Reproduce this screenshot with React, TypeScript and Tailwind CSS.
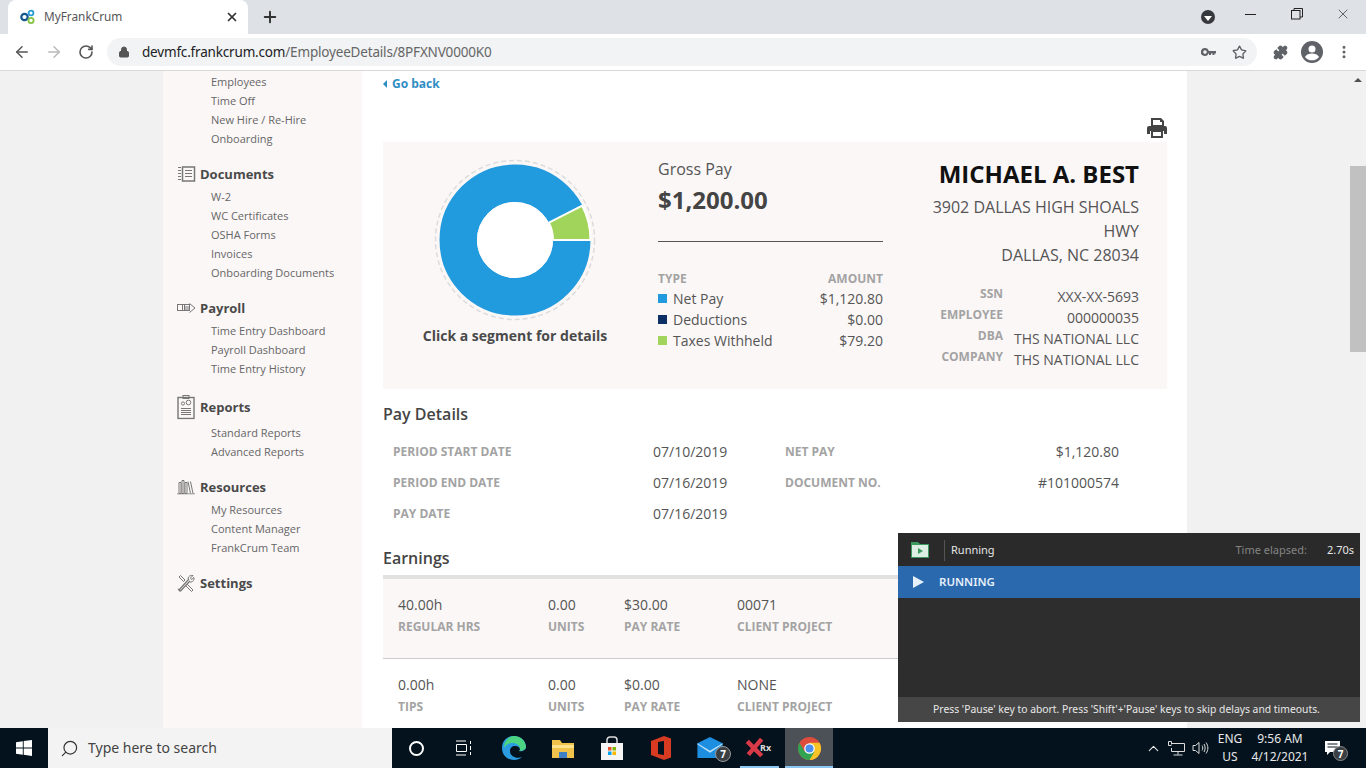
import { ArrowLeft, ArrowRight, ChevronUp, EllipsisVertical, Lock, Plus, Puzzle, RotateCw, Search, Star, X } from "lucide-react";
import type { ReactNode } from "react";

const sans = "font-['Open_Sans',sans-serif]";

function NavGroup({ icon, title, items, className }: { icon?: ReactNode; title?: string; items?: string[]; className: string }) {
  return (
    <div className={className}>
      {title && (
        <div className="relative flex h-5 items-center pl-[37px] text-[13px] font-bold leading-5 text-[#4a4a4a]">
          <span className="absolute left-[14px] top-1/2 -translate-y-1/2">{icon}</span>
          {title}
        </div>
      )}
      {items && (
        <ul className={title ? "pl-[48px] pt-[3px]" : "pl-[48px]"}>
          {items.map((item) => (
            <li key={item} className="h-[19px] text-[11px] leading-[19px] text-[#666]">
              {item}
            </li>
          ))}
        </ul>
      )}
    </div>
  );
}

const lineIcon = { fill: "none", stroke: "#777", strokeWidth: 1 };

function DocumentsIcon() {
  return (
    <svg width="19" height="17" viewBox="0 0 19 17" {...lineIcon} className="block">
      <rect x="5.5" y="1.5" width="12" height="14" strokeWidth="1.5" />
      <path d="M8 5h7M8 8h7M8 11h7M1 2h3M1 5h3M1 8h3M1 11h3M1 14h3" />
    </svg>
  );
}

function PayrollIcon() {
  return (
    <svg width="19" height="12" viewBox="0 0 19 12" {...lineIcon} className="block">
      <rect x="0.5" y="2.5" width="7" height="6" />
      <rect x="5.5" y="2.5" width="7" height="6" />
      <path d="M12.5 1.5 18 6l-5.500 4.500M8 5h4M8 7h4" />
    </svg>
  );
}

function ReportsIcon() {
  return (
    <svg width="19" height="25" viewBox="0 0 19 25" {...lineIcon} className="block">
      <rect x="1" y="3" width="16" height="21" strokeWidth="1.4" />
      <rect x="6" y="1" width="6" height="3" />
      <circle cx="6" cy="9" r="1.600" />
      <circle cx="11.500" cy="8" r="2.300" />
      <path d="M4 14h10M4 16h10M4 18h10M4 20h10" strokeWidth="1.200" />
    </svg>
  );
}

function ResourcesIcon() {
  return (
    <svg width="18" height="15" viewBox="0 0 18 15" {...lineIcon} className="block">
      <path d="M2 3h2v11H2zM5 1h2v13H5zM8 3h2v11H8zM11 2l2.500 12M13.500 2l2.500 12M0 14.500h18" />
    </svg>
  );
}

function SettingsIcon() {
  return (
    <svg width="18" height="18" viewBox="0 0 18 18" {...lineIcon} className="block">
      <path d="M2 16 12 5M3.500 17 13 7M1 15l2.500 2.500" strokeWidth="1.200" />
      <path d="M11 5c0-3 3-4 5-3.500L13.500 4l1 1.500L17 3.500c.5 2-1 5-4 4.500" />
      <path d="M2 3l1.500-1.500L8 6 6.500 7.500zM10 10l6 6-1.500 1.500-6-6" />
    </svg>
  );
}

function PrinterIcon() {
  return (
    <svg width="20" height="20" viewBox="0 0 20 20" className="block" fill="#444">
      <path d="M4 0h10l3 3v6H4zm2 2v5h9V4h-2V2z" fillRule="evenodd" />
      <path d="M2 8h16a2 2 0 0 1 2 2v6h-3v-3H3v3H0v-6a2 2 0 0 1 2-2z" />
      <path d="M4 12h12v8H4zm2 2v4h8v-4z" fillRule="evenodd" />
    </svg>
  );
}

function Donut() {
  return (
    <svg width="164" height="164" viewBox="-82 -82 164 164" className="block">
      <circle r="79.500" fill="none" stroke="#dcdcdc" strokeWidth="1.500" strokeDasharray="5 3" />
      <circle r="56.750" fill="none" stroke="#219ade" strokeWidth="37.500" />
      <path d="M38 0 75.500 0A75.500 75.500 0 0 0 67.300-34.300L33.900-17.300A38 38 0 0 1 38 0Z" fill="#a1d45b" stroke="#fff" strokeWidth="2" />
      <circle r="38" fill="#fff" />
    </svg>
  );
}

function LegendRow({ color, label, amount }: { color: string; label: string; amount: string }) {
  return (
    <div className="flex h-[21px] items-center text-sm text-[#555]">
      <span className={`mr-[6px] h-[9px] w-[9px] ${color}`} />
      <span className="flex-1">{label}</span>
      <span>{amount}</span>
    </div>
  );
}

function InfoRow({ label, value }: { label: string; value: string }) {
  return (
    <div className="flex h-[21px] items-center text-sm text-[#555]">
      <span className="-mt-[5px] w-[72px] text-right text-xs font-bold text-[#a3a3a3]">{label}</span>
      <span className="flex-1 text-right">{value}</span>
    </div>
  );
}

function EarningsRow({ cells, className }: { cells: [string, string][]; className: string }) {
  return (
    <div className={`grid grid-cols-[150px_76px_113px_1fr] pl-[15px] pt-4 ${className}`}>
      {cells.map(([value, label]) => (
        <div key={label}>
          <div className="text-sm leading-5 text-[#555]">{value}</div>
          <div className="mt-[2px] text-xs font-bold leading-5 text-[#a3a3a3]">{label}</div>
        </div>
      ))}
    </div>
  );
}

function Tray({ children, className = "" }: { children: ReactNode; className?: string }) {
  return <div className={`flex h-10 w-12 shrink-0 items-center justify-center ${className}`}>{children}</div>;
}

export default function App() {
  return (
    <div className={`relative flex h-[768px] w-[1366px] flex-col overflow-hidden bg-[#f1f1f1] ${sans}`}>
      {/* Browser tab strip */}
      <div className="flex h-[34px] shrink-0 items-center bg-[#dee1e6] font-['Noto_Sans',sans-serif]">
        <div className="relative ml-2 flex h-[34px] w-[240px] items-center rounded-t-lg bg-white pl-[12px] pr-[9px]">
          <svg width="16" height="16" viewBox="0 0 16 16" className="mr-2">
            <circle cx="4.500" cy="8" r="3.200" fill="none" stroke="#12568f" strokeWidth="2.200" />
            <circle cx="11" cy="4" r="2.400" fill="none" stroke="#2a9ad6" strokeWidth="1.800" />
            <circle cx="11" cy="11.500" r="2.600" fill="none" stroke="#86c441" strokeWidth="1.800" />
          </svg>
          <span className="flex-1 text-[11.8px] text-[#555]">MyFrankCrum</span>
          <X className="h-[14px] w-[14px] text-[#333]" strokeWidth={3} />
        </div>
        <Plus className="ml-[13px] h-[18px] w-[18px] text-[#333]" strokeWidth={2.6} />
        <div className="ml-auto flex items-center">
          <span className="flex h-[14px] w-[14px] items-center justify-center rounded-full bg-[#35393e]">
            <span className="mt-[2px] h-0 w-0 border-x-[4px] border-t-[5px] border-x-transparent border-t-white" />
          </span>
          <span className="-mt-[6px] ml-[30px] h-px w-[11px] bg-[#222]" />
          <svg width="12" height="12" viewBox="0 0 12 12" fill="none" stroke="#222" className="-mt-[6px] ml-[35px]">
            <rect x="0.500" y="2.500" width="8.500" height="8.500" />
            <path d="M3 2.500V.5h8.500V9H9" />
          </svg>
          <X className="-mt-[6px] ml-[32px] mr-[15px] h-[16px] w-[16px] text-[#222]" strokeWidth={1} />
        </div>
      </div>

      {/* Browser toolbar */}
      <div className="flex h-[37px] shrink-0 items-center border-b border-[#d8d8d8] bg-white font-['Noto_Sans',sans-serif]">
        <ArrowLeft className="ml-[13px] h-[18px] w-[18px] text-[#555]" strokeWidth={2} />
        <ArrowRight className="ml-[14px] h-[18px] w-[18px] text-[#bbb]" strokeWidth={2} />
        <RotateCw className="ml-[15px] h-4 w-4 text-[#555]" strokeWidth={2.4} />
        <div className="ml-[13px] flex h-[28px] w-[1150px] items-center rounded-full bg-[#f1f3f4] pl-[11px] pr-[10px]">
          <Lock className="h-3 w-3 fill-[#555] text-[#555]" strokeWidth={2} />
          <span className="ml-[12px] flex-1 text-[13.5px] tracking-[-0.18px] text-[#202124]">
            devmfc.frankcrum.com<span className="text-[#666]">/EmployeeDetails/8PFXNV0000K0</span>
          </span>
          <svg width="15" height="9" viewBox="0 0 15 9" className="mr-[16px]" fill="#5f6368">
            <path d="M4 0a4 4 0 0 1 3.800 3H15v2.500h-1.500V7h-2V5.500H10V7H8V5.500H7.500A4 4 0 1 1 4 0zm0 2.300a1.800 1.800 0 1 0 0 3.600 1.800 1.800 0 0 0 0-3.600z" fillRule="evenodd" />
          </svg>
          <Star className="h-[15px] w-[15px] text-[#5f6368]" strokeWidth={2.2} />
        </div>
        <Puzzle className="ml-[16px] h-[15px] w-[15px] fill-[#5f6368] text-[#5f6368]" strokeWidth={2} />
        <svg width="22" height="22" viewBox="0 0 22 22" className="ml-[13px]">
          <circle cx="11" cy="11" r="11" fill="#5f6368" />
          <circle cx="11" cy="8" r="3.500" fill="#fff" />
          <path d="M4 16c1.500-3 5-3.500 7-3.500s5.500.5 7 3.500a9 9 0 0 1-14 0z" fill="#fff" />
        </svg>
        <EllipsisVertical className="ml-[13px] h-4 w-4 text-[#5f6368]" strokeWidth={2.500} />
      </div>

      {/* Page */}
      <div className="flex min-h-0 flex-1">
        <div className="w-[163px] shrink-0 bg-[#f1f1f1]" />

        <aside className="w-[199px] shrink-0 bg-[#fbf7f7] pt-[1px]">
          <NavGroup items={["Employees", "Time Off", "New Hire / Re-Hire", "Onboarding"]} className="" />
          <NavGroup
            icon={<DocumentsIcon />}
            title="Documents"
            items={["W-2", "WC Certificates", "OSHA Forms", "Invoices", "Onboarding Documents"]}
            className="mt-[16px]"
          />
          <NavGroup
            icon={<PayrollIcon />}
            title="Payroll"
            items={["Time Entry Dashboard", "Payroll Dashboard", "Time Entry History"]}
            className="mt-[16px]"
          />
          <NavGroup icon={<ReportsIcon />} title="Reports" items={["Standard Reports", "Advanced Reports"]} className="mt-[19px] [&>ul]:pt-[6px]" />
          <NavGroup
            icon={<ResourcesIcon />}
            title="Resources"
            items={["My Resources", "Content Manager", "FrankCrum Team"]}
            className="mt-[16px]"
          />
          <NavGroup icon={<SettingsIcon />} title="Settings" className="mt-[16px]" />
        </aside>

        <main className="w-[825px] shrink-0 overflow-hidden bg-white pl-[21px] pr-[20px]">
          <div className="flex h-[25px] items-center pt-[1px] text-xs font-bold text-[#2f8ec4]">
            <span className="mr-[5px] h-0 w-0 border-y-[4px] border-r-[4px] border-y-transparent border-r-[#2f8ec4]" />
            Go back
          </div>
          <div className="flex h-[46px] justify-end pt-[22px]">
            <PrinterIcon />
          </div>

          {/* Summary card */}
          <section className="flex h-[247px] bg-[#fbf7f7]">
            <div className="flex w-[264px] shrink-0 flex-col items-center pt-[16px]">
              <Donut />
              <div className="mt-[4px] text-sm font-bold text-[#4a4a4a]">Click a segment for details</div>
            </div>
            <div className="ml-[11px] w-[225px] shrink-0 pt-[16px]">
              <div className="text-base leading-[22px] text-[#555]">Gross Pay</div>
              <div className="mt-[2px] text-2xl font-bold leading-[36px] text-[#444]">$1,200.00</div>
              <div className="mt-[23px] border-t border-[#555]" />
              <div className="mt-[27px] flex justify-between text-xs font-bold leading-5 text-[#a3a3a3]">
                <span>TYPE</span>
                <span>AMOUNT</span>
              </div>
              <div className="-mt-[1px]">
                <LegendRow color="bg-[#219ade]" label="Net Pay" amount="$1,120.80" />
                <LegendRow color="bg-[#0c2f66]" label="Deductions" amount="$0.00" />
                <LegendRow color="bg-[#a1d45b]" label="Taxes Withheld" amount="$79.20" />
              </div>
            </div>
            <div className="flex-1 pl-[48px] pr-[28px] pt-[13px] text-right">
              <div className="text-2xl font-bold leading-[38px] text-[#111]">MICHAEL A. BEST</div>
              <div className="mt-[2px] text-base leading-6 text-[#555]">
                3902 DALLAS HIGH SHOALS
                <br />
                HWY
                <br />
                DALLAS, NC 28034
              </div>
              <div className="mt-[19px]">
                <InfoRow label="SSN" value="XXX-XX-5693" />
                <InfoRow label="EMPLOYEE" value="000000035" />
                <InfoRow label="DBA" value="THS NATIONAL LLC" />
                <InfoRow label="COMPANY" value="THS NATIONAL LLC" />
              </div>
            </div>
          </section>

          {/* Pay details */}
          <h2 className="mt-[14px] text-base font-semibold leading-[22px] text-[#444]">Pay Details</h2>
          <div className="mt-[11px] pl-[10px] pr-[48px]">
            {[
              ["PERIOD START DATE", "07/10/2019", "NET PAY", "$1,120.80"],
              ["PERIOD END DATE", "07/16/2019", "DOCUMENT NO.", "#101000574"],
              ["PAY DATE", "07/16/2019", "", ""],
            ].map(([label, value, label2, value2]) => (
              <div key={label} className="grid h-[31px] grid-cols-[260px_132px_1fr] items-center text-sm text-[#555]">
                <span className="text-xs font-bold text-[#a3a3a3]">{label}</span>
                <span>{value}</span>
                <span className="flex justify-between">
                  <span className="text-xs font-bold leading-5 text-[#a3a3a3]">{label2}</span>
                  <span>{value2}</span>
                </span>
              </div>
            ))}
          </div>

          {/* Earnings */}
          <h2 className="mt-[18px] border-b-4 border-[#e3e0e0] pb-[6px] text-base font-semibold leading-[22px] text-[#444]">Earnings</h2>
          <EarningsRow
            cells={[
              ["40.00h", "REGULAR HRS"],
              ["0.00", "UNITS"],
              ["$30.00", "PAY RATE"],
              ["00071", "CLIENT PROJECT"],
            ]}
            className="h-[80px] border-b border-[#ccc] bg-[#fbf7f7]"
          />
          <EarningsRow
            cells={[
              ["0.00h", "TIPS"],
              ["0.00", "UNITS"],
              ["$0.00", "PAY RATE"],
              ["NONE", "CLIENT PROJECT"],
            ]}
            className="h-[80px]"
          />
        </main>

        <div className="w-[163px] shrink-0 bg-[#f1f1f1]" />

        {/* Scrollbar */}
        <div className="flex w-4 shrink-0 flex-col items-center bg-[#f1f1f1]">
          <span className="mt-[7px] h-0 w-0 border-x-[4px] border-b-[4px] border-x-transparent border-b-[#505050]" />
          <div className="mt-[84px] h-[186px] w-full bg-[#c1c1c1]" />
        </div>
      </div>

      {/* Windows taskbar */}
      <div className="flex h-10 shrink-0 items-center bg-[#03121c] font-['Noto_Sans',sans-serif] text-white">
        <Tray>
          <svg width="16" height="16" viewBox="0 0 16 16" fill="#fff">
            <path d="M0 2.200 6.800 1.200V7.500H0zM7.700 1.100 16 0v7.500H7.700zM0 8.400h6.800v6.400L0 13.800zM7.700 8.400H16V16l-8.300-1.200z" />
          </svg>
        </Tray>
        <div className="flex h-10 w-[344px] shrink-0 items-center bg-[#f3f3f3] pl-[12px] text-sm text-[#444]">
          <Search className="h-[19px] w-[19px] -scale-x-100 text-[#333]" strokeWidth={1.500} />
          <span className="ml-[9px]">Type here to search</span>
        </div>
        <Tray>
          <span className="h-[15px] w-[15px] rounded-full border-2 border-white" />
        </Tray>
        <Tray>
          <svg width="18" height="16" viewBox="0 0 18 16" fill="none" stroke="#fff">
            <path d="M1 1h10M1 15h10M1.500 4.500h10v7h-10zM15.500 1v3M15.500 6v4M15.500 12v3" />
          </svg>
        </Tray>
        <Tray className="w-[51px]">
          <svg width="24" height="24" viewBox="0 0 24 24">
            <path d="M12 0C5 0 0 5 0 12c0 7 5 12 12 12 3 0 6-1 8-3-5 2-12 0-12-6 0-3 2-5 5-5s5 1.500 5 3.500c0 1-1 1.500-1 1.500 3 1 7-1 7-4C24 5 19 0 12 0z" fill="#2a9be0" />
            <path d="M12 0c6 0 11 4 12 10.500 0 3-4 5-7 4 0 0 1-.5 1-1.500C18 9 14 6.500 9 7 6 7.500 3 10 2 12 2 6 6 0 12 0z" fill="#4bd583" />
          </svg>
        </Tray>
        <Tray>
          <svg width="22" height="19" viewBox="0 0 22 19">
            <path d="M0 1h8l2 3h12v15H0z" fill="#f0c14b" />
            <path d="M0 6h22v3H0z" fill="#ffe28a" />
            <path d="M7 19v-6h8v6z" fill="#3f7fc4" />
          </svg>
        </Tray>
        <Tray className="w-[49px]">
          <svg width="24" height="24" viewBox="0 0 24 24">
            <path d="M7 7V4a3 3 0 0 1 3-3h4a3 3 0 0 1 3 3v3" fill="none" stroke="#ddd" strokeWidth="1.500" />
            <path d="M1 7h22v17H1z" fill="#f5f5f5" />
            <path d="M8 11h3.500v3.500H8z" fill="#e6502a" />
            <path d="M12.500 11H16v3.500h-3.500z" fill="#7fb900" />
            <path d="M8 15.500h3.500V19H8z" fill="#00a4ef" />
            <path d="M12.500 15.500H16V19h-3.500z" fill="#ffb900" />
          </svg>
        </Tray>
        <Tray className="w-[49px]">
          <svg width="20" height="24" viewBox="0 0 20 24">
            <path d="M0 5 13 0l7 2.500v19L13 24 0 19z" fill="#d83b22" />
            <path d="M7 6l6-1v14l-6-1z" fill="#03121c" />
          </svg>
        </Tray>
        <Tray className="relative w-[52px]">
          <svg width="26" height="21" viewBox="0 0 24 20" className="translate-x-[-1px] translate-y-[-1px]">
            <path d="M0 6 12 0l12 6v14H0z" fill="#1e8fe0" />
            <path d="m0 6 12 7 12-7v1L12 15 0 7z" fill="#bfe3fb" />
          </svg>
          <span className="absolute left-[30px] top-[18px] flex h-[16px] w-[16px] items-center justify-center rounded-full border border-[#999] bg-[#3a3f44] text-[10px] font-bold leading-none">7</span>
        </Tray>
        <Tray className="relative">
          <svg width="22" height="20" viewBox="0 0 18 18" stroke="#d93a48" strokeWidth="4" className="-translate-x-[6px]">
            <path d="M2 3l13 13M15 1 3 15" />
          </svg>
          <span className="absolute left-[23px] top-[13px] text-[9px] font-bold text-[#ddd]">Rx</span>
          <span className="absolute bottom-0 left-[3px] h-[2px] w-[39px] bg-[#8cc6f2]" />
        </Tray>
        <Tray className="relative bg-[#4b5157]">
          <svg width="23" height="23" viewBox="0 0 24 24">
            <circle cx="12" cy="12" r="12" fill="#dd4c3c" />
            <path d="M12 24a12 12 0 0 0 10.400-18H12z" fill="#f7c325" />
            <path d="M1.600 6A12 12 0 0 0 12 24l5.200-9H6.800z" fill="#32a350" />
            <circle cx="12" cy="12" r="5.500" fill="#fff" />
            <circle cx="12" cy="12" r="4.200" fill="#4c8ff0" />
          </svg>
          <span className="absolute bottom-0 left-0 h-[2px] w-full bg-[#8cc6f2]" />
        </Tray>

        <div className="ml-auto flex items-center">
          <ChevronUp className="h-[17px] w-[17px] text-[#e8e8e8]" strokeWidth={1.500} />
          <svg width="17" height="15" viewBox="0 0 17 15" fill="none" stroke="#ddd" className="ml-[6px]">
            <path d="M3.500 3.500V.5h-3v4h3M3.500 2.500h13v8h-13V7M10 10.500v3M5.500 14h9" />
          </svg>
          <svg width="17" height="14" viewBox="0 0 17 14" fill="none" stroke="#ddd" className="ml-[7px]">
            <path d="M1 4.500h2.500L7 1.500v11l-3.500-3H1zM10 4.500c1 1.500 1 3.500 0 5M12 3c1.500 2.500 1.500 5.500 0 8M14 1.500c2.500 3.500 2.500 7.500 0 11" />
          </svg>
          <div className="ml-[8px] w-[26px] text-center text-xs leading-[18px] text-[#e8e8e8]">
            ENG
            <br />
            US
          </div>
          <div className="ml-[5px] w-[64px] text-center text-xs leading-[18px] text-[#e8e8e8]">
            9:56 AM
            <br />
            4/12/2021
          </div>
          <div className="relative ml-[13px] mr-[25px] h-4 w-4">
            <svg width="16" height="16" viewBox="0 0 16 16" fill="#fff">
              <path d="M0 1h15v11H5l-3 3v-3H0zM2.500 3.500v1h10v-1zm0 3v1h10v-1z" fillRule="evenodd" />
            </svg>
            <span className="absolute left-[8px] top-[6px] flex h-[15px] w-[15px] items-center justify-center rounded-full border border-[#888] bg-[#3a3f44] text-[10px] font-bold leading-none">7</span>
          </div>
        </div>
      </div>

      {/* Floating test runner panel */}
      <div className="absolute left-[898px] top-[533px] flex h-[189px] w-[462px] flex-col bg-[#2d2d2d] font-['Noto_Sans',sans-serif] text-white">
        <div className="flex h-[33px] shrink-0 items-center bg-[#2a2a2a] pl-[13px] pr-[6px] pt-[1px] text-[11px]">
          <svg width="18" height="16" viewBox="0 0 18 16">
            <path d="M0 0h7l2 2h9v14H0z" fill="#3c9a5f" />
            <path d="M1 3h16v12H1z" fill="#dcefe2" />
            <path d="m7 6 5 3-5 3z" fill="#3c9a5f" />
          </svg>
          <span className="ml-[15px] h-[21px] w-px bg-[#555]" />
          <span className="ml-[6px] flex-1 text-[#e6e6e6]">Running</span>
          <span className="text-[#858585]">Time elapsed:</span>
          <span className="ml-[20px] text-[#e6e6e6]">2.70s</span>
        </div>
        <div className="flex h-[32px] shrink-0 items-center bg-[#2b69ae] pl-[15px] text-[11.5px] font-semibold">
          <span className="h-0 w-0 border-y-[6px] border-l-[11px] border-y-transparent border-l-[#e6f0fa]" />
          <span className="ml-[15px] text-[#e6f0fa]">RUNNING</span>
        </div>
        <div className="flex-1" />
        <div className="flex h-[25px] shrink-0 items-center justify-center bg-[#464646] pr-[5px] text-[10.35px] text-[#e6e6e6]">
          Press 'Pause' key to abort. Press 'Shift'+'Pause' keys to skip delays and timeouts.
        </div>
      </div>
    </div>
  );
}
